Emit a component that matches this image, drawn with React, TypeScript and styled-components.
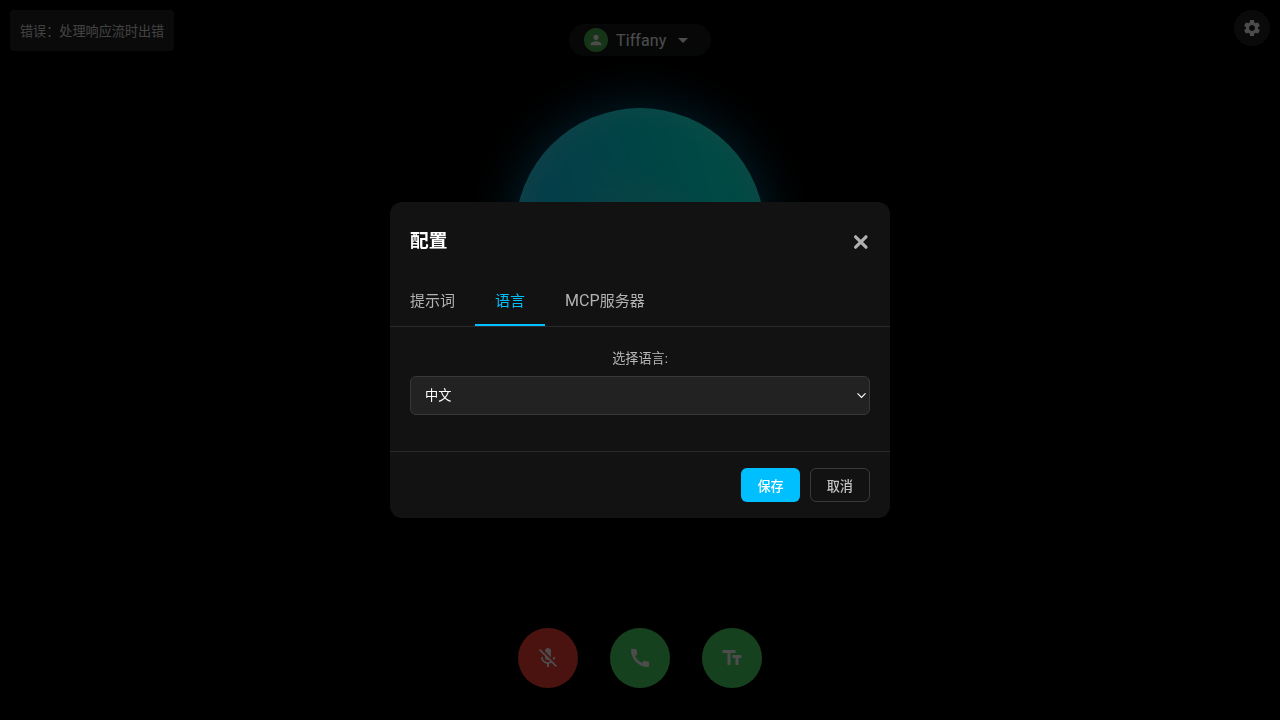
import React from "react";
import styled, { createGlobalStyle } from "styled-components";
import { MdCall, MdMicOff, MdPerson, MdSettings, MdTextFields, MdArrowDropDown } from "react-icons/md";

const GlobalStyle = createGlobalStyle`
  * { box-sizing: border-box; }
  body {
    margin: 0;
    background: #000;
    color: #fff;
    font-family: Roboto, "Noto Sans CJK SC", sans-serif;
    overflow: hidden;
  }
  button, select { font-family: inherit; }
`;

const Page = styled.main`
  position: relative;
  height: 100vh;
  display: flex;
  flex-direction: column;
  align-items: center;
  justify-content: space-between;
  padding: 24px 0 32px;
`;

const Toast = styled.div`
  position: absolute;
  top: 10px;
  left: 10px;
  height: 41px;
  padding: 0 10px;
  display: flex;
  align-items: center;
  border-radius: 4px;
  background: #222;
  color: #ddd;
  font-size: 13.12px;
`;

const SettingsButton = styled.button`
  position: absolute;
  top: 10px;
  right: 10px;
  width: 36px;
  height: 36px;
  padding: 0;
  display: grid;
  place-items: center;
  border: 0;
  border-radius: 50%;
  background: #222;
  color: #fff;
`;

const Persona = styled.button`
  width: 142px;
  height: 32px;
  padding: 0 15px;
  display: flex;
  align-items: center;
  border: 0;
  border-radius: 16px;
  background: #181a1a;
  color: #fff;
  font-size: 16px;
  letter-spacing: 0.1px;
  line-height: 20px;
  flex-shrink: 0;
`;

const PersonaName = styled.span`
  padding-top: 2px;
`;

const Avatar = styled.span`
  width: 24px;
  height: 24px;
  margin-right: 8px;
  flex-shrink: 0;
  display: grid;
  place-items: center;
  border-radius: 50%;
  background: #4caf50;
`;

const Caret = styled(MdArrowDropDown)`
  margin-left: 5px;
  flex-shrink: 0;
`;

const Orb = styled.div`
  width: 250px;
  height: 250px;
  margin-bottom: 218px;
  flex-shrink: 0;
  border-radius: 50%;
  background:
    radial-gradient(circle at 50% 50%, rgba(255, 215, 195, 0.18), transparent 40%),
    linear-gradient(75deg, #10c8f0 0%, #10d2f0 30%, #00e6ea 58%, #00f7e2 82%, #00e8e0 100%);
  box-shadow: 0 0 50px rgba(0, 175, 255, 0.6), 0 0 110px rgba(0, 255, 170, 0.05),
    inset 0 0 28px rgba(255, 255, 255, 0.24);
`;

const Controls = styled.div`
  display: flex;
  gap: 32px;
`;

const RoundButton = styled.button<{ $color: string }>`
  width: 60px;
  height: 60px;
  padding: 0;
  display: grid;
  place-items: center;
  border: 0;
  border-radius: 50%;
  background: ${({ $color }) => $color};
  color: #fff;
`;

const Overlay = styled.div`
  position: fixed;
  inset: 0;
  display: flex;
  align-items: center;
  justify-content: center;
  background: rgba(0, 0, 0, 0.7);
`;

const Dialog = styled.section`
  width: 500px;
  border-radius: 12px;
  background: #121212;
  overflow: hidden;
`;

const DialogHeader = styled.header`
  height: 74px;
  padding: 6px 20px 0;
  display: flex;
  align-items: center;
  justify-content: space-between;
`;

const Title = styled.h3`
  margin: 0 0 7px;
  font-size: 18.72px;
  font-weight: 600;
`;

const CloseButton = styled.button`
  width: 18px;
  height: 18px;
  padding: 0;
  display: grid;
  place-items: center;
  border: 0;
  background: none;
  color: #b0b0b0;
`;

const Tabs = styled.nav`
  display: flex;
  border-bottom: 1px solid #2a2a2a;
`;

const Tab = styled.button<{ $active?: boolean }>`
  height: 50px;
  padding: 0 20px;
  border: 0;
  border-bottom: 2px solid ${({ $active }) => ($active ? "#00bfff" : "transparent")};
  background: none;
  color: ${({ $active }) => ($active ? "#00bfff" : "#b3b3b3")};
  font-size: 15px;
`;

const Latin = styled.span`
  font-size: 16px;
  line-height: 1;
  letter-spacing: 0.1px;
`;

const DialogBody = styled.div`
  height: 124px;
  padding: 20px 20px 0;
  display: flex;
  flex-direction: column;
`;

const Label = styled.label`
  height: 29px;
  line-height: 23px;
  color: #b8b8b8;
  font-size: 13.12px;
  text-align: center;
`;

const SelectField = styled.div`
  display: grid;
  align-items: center;

  > * {
    grid-area: 1 / 1;
  }
`;

const Select = styled.select`
  appearance: none;
  width: 100%;
  height: 39px;
  padding: 0 14px;
  border: 1px solid #383838;
  border-radius: 6px;
  background: #222;
  color: #fff;
  font-size: 13.2px;
`;

const Chevron = styled.svg`
  justify-self: end;
  margin-right: 3px;
  pointer-events: none;
`;

const DialogFooter = styled.footer`
  height: 67.5px;
  padding: 16px 20px;
  display: flex;
  justify-content: flex-end;
  gap: 10px;
  border-top: 1px solid #2a2a2a;
`;

const ActionButton = styled.button<{ $primary?: boolean }>`
  height: 34.5px;
  padding: 0 16px;
  border: ${({ $primary }) => ($primary ? "0" : "1px solid #3a3a3a")};
  border-radius: 6px;
  background: ${({ $primary }) => ($primary ? "#00bfff" : "transparent")};
  color: ${({ $primary }) => ($primary ? "#fff" : "#c4c4c4")};
  font-size: 13.15px;
  font-weight: 500;
`;

export default function App() {
  return (
    <>
      <GlobalStyle />
      <Page>
        <Toast>错误：处理响应流时出错</Toast>
        <SettingsButton aria-label="设置">
          <MdSettings size={20} />
        </SettingsButton>
        <Persona>
          <Avatar>
            <MdPerson size={16} />
          </Avatar>
          <PersonaName>Tiffany</PersonaName>
          <Caret size={24} />
        </Persona>
        <Orb />
        <Controls>
          <RoundButton $color="#fc4034" aria-label="静音">
            <MdMicOff size={24} />
          </RoundButton>
          <RoundButton $color="#4cd964" aria-label="通话">
            <MdCall size={24} />
          </RoundButton>
          <RoundButton $color="#4cd964" aria-label="文字">
            <MdTextFields size={24} />
          </RoundButton>
        </Controls>
      </Page>
      <Overlay>
        <Dialog role="dialog">
          <DialogHeader>
            <Title>配置</Title>
            <CloseButton aria-label="关闭">
              <svg width="18" height="18" viewBox="0 0 18 18" fill="none" stroke="currentColor" strokeWidth="3.2" strokeLinecap="round">
                <path d="M3.6 3.8l10.4 10.4M14 3.8L3.6 14.2" />
              </svg>
            </CloseButton>
          </DialogHeader>
          <Tabs>
            <Tab>提示词</Tab>
            <Tab $active>语言</Tab>
            <Tab>
              <Latin>MCP</Latin>服务器
            </Tab>
          </Tabs>
          <DialogBody>
            <Label htmlFor="language">选择语言:</Label>
            <SelectField>
              <Select id="language" defaultValue="zh">
                <option value="zh">中文</option>
              </Select>
              <Chevron width="11" height="8" viewBox="0 0 11 8" fill="none" stroke="#fff" strokeWidth="1.15">
                <path d="M1.5 2.4l4 4 4-4" />
              </Chevron>
            </SelectField>
          </DialogBody>
          <DialogFooter>
            <ActionButton $primary>保存</ActionButton>
            <ActionButton>取消</ActionButton>
          </DialogFooter>
        </Dialog>
      </Overlay>
    </>
  );
}
